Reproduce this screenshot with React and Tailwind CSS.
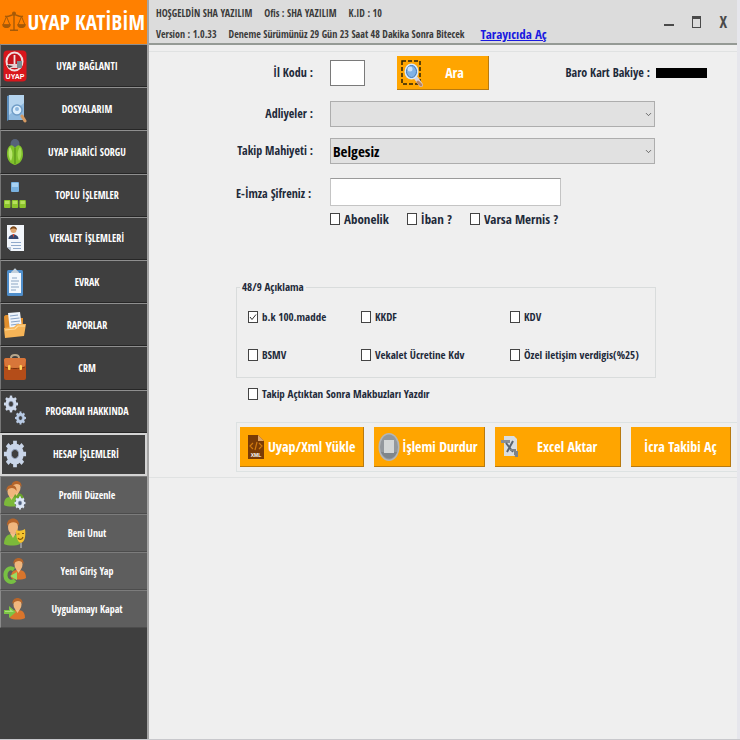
import { ChevronDown } from 'lucide-react';
import clsx from 'clsx';

/* ---------- Sidebar icons ---------- */

function ScalesIcon() {
  return (
    <svg viewBox="0 0 24 24" className="w-6 h-6 shrink-0" fill="none" stroke="#a65a08" strokeWidth="1.4">
      <path d="M12 2.5v17M8 20.2h8M3 6.2c4 1.2 6-1.6 9-1.6s5 2.8 9 1.6" />
      <path d="M4.5 6.5 1 15h7L4.5 6.5ZM19.5 6.5 16 15h7L19.5 6.5Z" strokeWidth="1" />
      <path d="M1 15c.6 3 6.400 3 7 0ZM16 15c.6 3 6.400 3 7 0Z" fill="#a65a08" />
      <circle cx="12" cy="3.600" r="1.300" fill="#a65a08" />
    </svg>
  );
}

function UyapIcon() {
  return (
    <svg viewBox="0 0 24 32" className="w-6 h-8">
      <rect x="0.500" y="0.500" width="23" height="31" rx="4" fill="#d9161c" />
      <ellipse cx="11.500" cy="11.500" rx="8" ry="9" fill="#c5131a" stroke="#f0dede" strokeWidth="2" />
      <path d="M11.500 5v9" stroke="#f3e4e4" strokeWidth="1.800" />
      <path d="M5 14h13l-2 4H7Z" fill="#e8cfd0" />
      <path d="m4 15 6 1-4 2Z" fill="#3c3c3c" />
      <rect x="14" y="11" width="5" height="7" fill="#7f8d94" />
      <text x="12" y="29" textAnchor="middle" fontSize="7" fontWeight="700" fontFamily="Liberation Sans" fill="#fff">UYAP</text>
    </svg>
  );
}

function FilesIcon() {
  return (
    <svg viewBox="0 0 24 32" className="w-6 h-8">
      <path d="M4 3 7 2v24l-3 2Z" fill="#5e8fbd" />
      <rect x="6" y="2" width="15" height="25" fill="#8fb9de" />
      <path d="M6 2h15v8L6 22Z" fill="#b5d4ee" />
      <circle cx="14" cy="17" r="5" fill="#dceefc" stroke="#6f9cc6" strokeWidth="1.500" />
      <circle cx="14" cy="16" r="2" fill="#8db6dd" />
      <path d="m19 23 3 5" stroke="#d59a62" strokeWidth="3" strokeLinecap="round" />
    </svg>
  );
}

function BugIcon() {
  return (
    <svg viewBox="0 0 24 32" className="w-6 h-8">
      <ellipse cx="12" cy="8" rx="4.500" ry="5" fill="#56627a" />
      <path d="M12 12C8 6 4 11 4 18s4 10 8 11c4-1 8-4 8-11s-4-12-8-6Z" fill="#7fc02b" />
      <path d="M7 11c-2 3-2 10 1 14 2-5 2-10-1-14Z" fill="#b9e56c" />
      <path d="M17 11c2 3 2 10-1 14-2-5-2-10 1-14Z" fill="#a4dc50" />
      <path d="M12 12v16" stroke="#4e8515" strokeWidth="1" />
    </svg>
  );
}

function BlocksIcon() {
  return (
    <svg viewBox="0 0 24 32" className="w-6 h-8">
      <rect x="8" y="3" width="8" height="10" rx="1" fill="#79b2e0" />
      <rect x="9" y="4" width="6" height="4" fill="#a8d2f2" />
      <rect x="1" y="21" width="6.500" height="8" rx="1" fill="#8cc42c" />
      <rect x="8.700" y="21" width="6.500" height="8" rx="1" fill="#8cc42c" />
      <rect x="16.400" y="21" width="6.500" height="8" rx="1" fill="#8cc42c" />
      <path d="M2 22h4.500v3H2ZM9.700 22h4.500v3H9.700ZM17.400 22h4.500v3h-4.500Z" fill="#b6e05c" />
    </svg>
  );
}

function ProxyIcon() {
  return (
    <svg viewBox="0 0 24 32" className="w-6 h-8">
      <path d="M4 3h17v26H8l-4-4Z" fill="#f2f6fb" />
      <path d="M4 25h4v4Z" fill="#b8c6d8" />
      <circle cx="10.500" cy="8" r="3" fill="#e0a872" />
      <path d="M7 8c0-5 7-5 7 0-2-2-5-2-7 0Z" fill="#7c4a1c" />
      <path d="M5.500 17c0-6 10-6 10 0Z" fill="#34466f" />
      <path d="m9.500 12 1 4 1-4Z" fill="#d84b30" />
      <path d="M8 20.500h10M8 23.500h10M10 26.500h8" stroke="#8fa9cb" strokeWidth="1.200" />
    </svg>
  );
}

function ClipboardIcon() {
  return (
    <svg viewBox="0 0 24 32" className="w-6 h-8">
      <rect x="4" y="4" width="16" height="26" rx="1.500" fill="#4f8ecb" />
      <path d="M6 7h12v20H6Z" fill="#f3f8fd" />
      <path d="M8 7c0-2 2-2 2.500-3 .5-2 2.500-2 3 0 .5 1 2.500 1 2.500 3Z" fill="#c3d0dc" />
      <path d="M9 12h5M8 15h8M8 18h7M8 21h8M8 24h5" stroke="#8ba6c6" strokeWidth="1.200" />
    </svg>
  );
}

function FolderIcon() {
  return (
    <svg viewBox="0 0 24 32" className="w-6 h-8">
      <path d="M1 8c0-1 1-2 2-2h5l2 3h10v18H2Z" fill="#e08f2e" />
      <path d="m5 4 12-1 2 16-12 3Z" fill="#eef4fb" />
      <path d="m7 7 8-1M7.500 10l9-1M8 13l9-1M8 16l8-1" stroke="#88a3c6" strokeWidth="1.200" />
      <path d="M1 19 11 18l3-3h9l-2 12-19 2Z" fill="#f6b457" />
      <path d="m2 21 10-1 3-3h7" stroke="#ffdc9c" strokeWidth="1.200" fill="none" />
    </svg>
  );
}

function BriefcaseIcon() {
  return (
    <svg viewBox="0 0 24 32" className="w-6 h-8">
      <path d="M8 6c0-4 8-4 8 0" stroke="#b8a78c" strokeWidth="2" fill="none" />
      <rect x="1" y="6" width="22" height="22" rx="2" fill="#b44d19" />
      <path d="M1 8c0-1 1-2 2-2h18c1 0 2 1 2 2l-1 7c-6 2-14 2-20 0Z" fill="#d8763a" />
      <path d="M2 15c6 2 14 2 20 0" stroke="#7b300c" strokeWidth="1" fill="none" />
      <rect x="5" y="13" width="2.500" height="5" rx="1" fill="#ffd45a" />
      <rect x="16.500" y="13" width="2.500" height="5" rx="1" fill="#ffd45a" />
    </svg>
  );
}

function Cog({ cx, cy, r, fill }) {
  const teeth = [0, 45, 90, 135, 180, 225, 270, 315];
  return (
    <g transform={`translate(${cx} ${cy}) scale(1 1.2)`}>
      {teeth.map((a) => (
        <rect key={a} x={-r * 0.22} y={-r * 1.3} width={r * 0.44} height={r * 0.6} fill={fill} transform={`rotate(${a})`} />
      ))}
      <circle r={r * 0.72} fill="none" stroke={fill} strokeWidth={r * 0.62} />
      <circle r={r * 0.43} fill="none" stroke="#8b9ab3" strokeWidth={r * 0.1} />
    </g>
  );
}

function GearsIcon() {
  return (
    <svg viewBox="0 0 24 32" className="w-6 h-8">
      <Cog cx={8} cy={9} r={5.4} fill="#cfdaec" />
      <Cog cx={17.5} cy={23} r={4.2} fill="#b8cae4" />
    </svg>
  );
}

function GearIcon() {
  return (
    <svg viewBox="0 0 24 32" className="w-6 h-8">
      <Cog cx={12} cy={16} r={8.5} fill="#c9d5e8" />
    </svg>
  );
}

function Person({ x, y, shirt }) {
  return (
    <g transform={`translate(${x} ${y})`}>
      <path d="M0 21c0-8 4-8 7-8s8 0 8 8c-3 2-12 2-15 0Z" fill={shirt} />
      <path d="m5 12 2.500 4 2.500-4Z" fill="#f2c08b" />
      <ellipse cx="7.500" cy="7.500" rx="4" ry="5.500" fill="#f0b67d" />
      <path d="M2.500 7c-1-8 11-8 10 0-2-4-7-4-10 0Z" fill="#b5652b" />
    </g>
  );
}

function ProfileIcon() {
  return (
    <svg viewBox="0 0 24 32" className="w-6 h-8">
      <Person x={6} y={1} shirt="#6aa52c" />
      <Person x={1} y={5} shirt="#7cb93a" />
      <circle cx="17" cy="24" r="5" fill="#51617f" />
      <Cog cx={17} cy={24} r={4.2} fill="#dde7f5" />
    </svg>
  );
}

function ForgetIcon() {
  return (
    <svg viewBox="0 0 24 32" className="w-6 h-8">
      <path d="M1 27c0-6 3-10 8-10s8 4 8 10c-4 2-12 2-16 0Z" fill="#7cb93a" />
      <path d="m7 16 3 5 3-5Z" fill="#f2c08b" />
      <ellipse cx="10" cy="10" rx="5" ry="7" fill="#f0b67d" />
      <path d="M4 9c-1-10 13-10 12 0-2-5-9-5-12 0Z" fill="#b5652b" />
      <path d="M13 13c3 1 6 1 9-1 1 6 0 13-4 14-4-1-5-7-5-13Z" fill="#f7c42f" />
      <path d="M14.500 17h2M19 16.500h2M15 21c1 2 4 2 5-1" stroke="#865b06" strokeWidth="1.200" fill="none" />
      <path d="M18 26v5" stroke="#c9c9c9" strokeWidth="1" />
    </svg>
  );
}

function LoginIcon() {
  return (
    <svg viewBox="0 0 24 32" className="w-6 h-8">
      <Person x={8} y={2} shirt="#d9752c" />
      <path d="M11 14.500C6 11 2 16 2.500 21S8 29 12 25" stroke="#77c043" strokeWidth="4" fill="none" />
      <path d="m7 21 7-4v8Z" fill="#9adb62" />
    </svg>
  );
}

function ExitIcon() {
  return (
    <svg viewBox="0 0 24 32" className="w-6 h-8">
      <Person x={7} y={4} shirt="#d9752c" />
      <path d="M1 17h5v-4l7 6-7 6v-4H1Z" fill="#7cc544" />
      <path d="M2 18h5v-2l4 3H2Z" fill="#a9e07a" />
    </svg>
  );
}

/* ---------- Button icons ---------- */

function SearchIcon() {
  return (
    <svg viewBox="0 0 24 30" className="w-6 h-[30px] shrink-0">
      <rect x="1" y="3" width="18" height="23" fill="none" stroke="#2a2208" strokeWidth="1.500" strokeDasharray="4 2" />
      <path d="m15 20 5 7" stroke="#d9d3d8" strokeWidth="4" strokeLinecap="round" />
      <path d="m17 24 3 3" stroke="#b98563" strokeWidth="3" strokeLinecap="round" />
      <ellipse cx="10.500" cy="13.500" rx="7" ry="8" fill="#d8e9f8" />
      <ellipse cx="10.500" cy="13.500" rx="5" ry="6" fill="#7fb2e6" stroke="#3f74b0" strokeWidth="1" />
      <ellipse cx="9" cy="11" rx="2.500" ry="2.500" fill="#c9e2fa" />
    </svg>
  );
}

function XmlIcon() {
  return (
    <svg viewBox="0 0 16 24" className="w-4 h-6 shrink-0">
      <path d="M0 0h10l6 6v18H0Z" fill="#7a3b06" />
      <path d="M10 0v6h6Z" fill="#e0a566" />
      <path d="m5 8-3 3 3 3M11 8l3 3-3 3M9 7l-2 8" stroke="#d17a10" strokeWidth="1.200" fill="none" />
      <text x="8" y="21.500" textAnchor="middle" fontSize="5" fontWeight="700" fontFamily="Liberation Sans" fill="#fff">XML</text>
    </svg>
  );
}

function StopIcon() {
  return (
    <svg viewBox="0 0 22 30" className="w-[22px] h-[30px] shrink-0">
      <ellipse cx="11" cy="15" rx="10.500" ry="14" fill="#b3b6b8" />
      <ellipse cx="11" cy="15" rx="9" ry="12.500" fill="#92989d" />
      <path d="M3 20c3 8 13 9 16 0Z" fill="#7f868b" />
      <rect x="6" y="8" width="10" height="13" fill="#d3d7d7" />
    </svg>
  );
}

function ExcelIcon() {
  return (
    <svg viewBox="0 0 18 24" className="w-[18px] h-6 shrink-0">
      <path d="M3 1h10l3 3v17H3Z" fill="#d9dde0" />
      <path d="M0 5h9v3H0Z" fill="#8a8f95" />
      <path d="m5 8 7 9M12 6 6 17" stroke="#5b6570" strokeWidth="2" />
      <path d="M9 15h5v5" stroke="#7d838a" strokeWidth="2" fill="none" />
      <path d="M13 16h4v6h-3Z" fill="#7d838a" />
    </svg>
  );
}

/* ---------- Data ---------- */

const MENU = [
  { label: 'UYAP BAĞLANTI', icon: UyapIcon },
  { label: 'DOSYALARIM', icon: FilesIcon },
  { label: 'UYAP HARİCİ SORGU', icon: BugIcon },
  { label: 'TOPLU İŞLEMLER', icon: BlocksIcon },
  { label: 'VEKALET İŞLEMLERİ', icon: ProxyIcon },
  { label: 'EVRAK', icon: ClipboardIcon },
  { label: 'RAPORLAR', icon: FolderIcon },
  { label: 'CRM', icon: BriefcaseIcon },
  { label: 'PROGRAM HAKKINDA', icon: GearsIcon },
  { label: 'HESAP İŞLEMLERİ', icon: GearIcon, active: true },
];

const SUBMENU = [
  { label: 'Profili Düzenle', icon: ProfileIcon },
  { label: 'Beni Unut', icon: ForgetIcon },
  { label: 'Yeni Giriş Yap', icon: LoginIcon },
  { label: 'Uygulamayı Kapat', icon: ExitIcon },
];

/* ---------- Parts ---------- */

function MenuButton({ item, sub }) {
  const Icon = item.icon;
  return (
    <button
      type="button"
      className={clsx(
        'flex items-center w-full text-white text-[10px] leading-4 font-bold',
        sub && 'pl-0.5 border-y border-l bg-[#5e5e5e] border-t-[#7c7c7c] border-b-[#4c4c4c] border-l-[#8a8a8a]',
        !sub && !item.active && 'pl-0.5 border-y border-l bg-[#3f3f3f] border-t-[#8f8f8f] border-b-[#262626] border-l-[#777777]',
        item.active && 'pl-px bg-[#3f3f3f] border-2 border-[#d4d4d4]'
      )}
    >
      <Icon />
      <span className="flex-1 text-center whitespace-nowrap">{item.label}</span>
    </button>
  );
}

function Check({ label, checked }) {
  return (
    <label className="flex items-center gap-1 whitespace-nowrap">
      <span className="grid place-items-center">
        <input
          type="checkbox"
          defaultChecked={checked}
          className="peer appearance-none col-start-1 row-start-1 w-2.5 h-3 bg-white border border-[#444444]"
        />
        <svg
          viewBox="0 0 10 12"
          className="col-start-1 row-start-1 w-2.5 h-3 pointer-events-none invisible peer-checked:visible"
          fill="none"
          stroke="#333333"
        >
          <path d="m2 6 2 2.500L8 3.500" />
        </svg>
      </span>
      {label}
    </label>
  );
}

function Dropdown({ id, options }) {
  return (
    <div className="grid items-center">
      <select
        id={id}
        className="appearance-none col-start-1 row-start-1 w-full h-[26px] px-0.5 bg-[#e1e1e1] border border-[#adadad] text-black text-[15px] leading-5"
      >
        {options.map((o) => (
          <option key={o}>{o}</option>
        ))}
      </select>
      <ChevronDown size={9} className="col-start-1 row-start-1 justify-self-end mr-0.5 text-[#444444] pointer-events-none" />
    </div>
  );
}

function ActionButton({ icon: Icon, children, className }) {
  return (
    <button
      type="button"
      className={clsx(
        'flex items-center bg-[#ffa500] border-b border-r border-[#b87a10] text-white font-bold text-[14px] leading-5 whitespace-nowrap',
        className
      )}
    >
      {Icon && <Icon />}
      <span className="flex-1 text-center">{children}</span>
    </button>
  );
}

/* ---------- Page ---------- */

export default function App() {
  return (
    <div className="flex min-h-screen bg-[#efefef] border-b border-[#c8c8cc] font-['Open_Sans_Condensed','Roboto_Condensed','Open_Sans',sans-serif] text-[#1e2a3a]">

      {/* Sidebar */}
      <aside className="w-[149px] shrink-0 flex flex-col bg-[#3f3f3f] border-r-2 border-[#a4a4a4]">
        <div className="h-11 px-0.5 flex items-center justify-between bg-[#ff8000] text-white">
          <ScalesIcon />
          <h1 className="text-[21px] leading-6 font-bold whitespace-nowrap">UYAP KATİBİM</h1>
        </div>
        <nav>
          <div className="grid auto-rows-fr min-h-[432px]">
            {MENU.map((item) => (
              <MenuButton key={item.label} item={item} />
            ))}
          </div>
          <div className="grid auto-rows-fr min-h-[152px]">
            {SUBMENU.map((item) => (
              <MenuButton key={item.label} item={item} sub />
            ))}
          </div>
        </nav>
      </aside>

      <div className="flex-1 min-w-0 flex flex-col border-r-3 border-[#e6e6ec]">
        {/* Title bar */}
        <header className="h-[45px] pl-[7px] pr-2.5 flex justify-between bg-[#dcdcdc] border-b-2 border-[#959a95]">
          <div className="flex flex-col gap-1.5 pt-1.5 text-[10px] leading-[15px] font-semibold text-[#3a3a3a] whitespace-nowrap">
            <div className="flex gap-3">
              <span>HOŞGELDİN SHA YAZILIM</span>
              <span>Ofis : SHA YAZILIM</span>
              <span>K.ID : 10</span>
            </div>
            <div className="flex gap-3">
              <span>Version : 1.0.33</span>
              <span>Deneme Sürümünüz 29 Gün 23 Saat 48 Dakika Sonra Bitecek</span>
              <a href="#tarayici" className="ml-1 text-[13px] leading-[15px] font-bold text-[#1a1ae0] underline">Tarayıcıda Aç</a>
            </div>
          </div>
          <div className="flex items-center gap-[18px] text-[#4a4a4a]">
            <button type="button" aria-label="Küçült" className="w-2.5 h-3 flex items-end">
              <span className="w-full h-0.5 mb-0.5 bg-[#4a4a4a]" />
            </button>
            <button type="button" aria-label="Büyüt" className="w-[9px] h-3 border border-t-[3px] border-[#4a4a4a]" />
            <button type="button" aria-label="Kapat" className="text-base leading-4 font-bold">X</button>
          </div>
        </header>

        <main className="mt-1.5 border-y border-[#e0e2e2] pb-[5px] font-bold text-xs leading-4">
          {/* Query form */}
          <form className="pl-[87px]">
            <div className="grid grid-cols-[77px_1fr] gap-x-[17px] pt-1 pr-[30px] items-center">
              <label htmlFor="ilkodu" className="text-right">İl Kodu :</label>
              <div className="flex items-center justify-between">
                <div className="flex items-center gap-8">
                  <input id="ilkodu" type="text" className="w-[35px] h-[26px] px-1 bg-white border border-[#7a7a7a]" />
                  <ActionButton icon={SearchIcon} className="w-[92px] h-[34px] pl-1 pr-1">Ara</ActionButton>
                </div>
                <div className="flex items-center gap-1.5 whitespace-nowrap">
                  <span>Baro Kart Bakiye :</span>
                  <span className="w-[51px] h-2.5 bg-black" />
                </div>
              </div>
            </div>

            <div className="grid grid-cols-[77px_1fr] gap-x-[17px] gap-y-[11px] mt-[11px] mr-[82px] items-center">
              <label htmlFor="adliyeler" className="text-right">Adliyeler :</label>
              <Dropdown id="adliyeler" options={['']} />
              <label htmlFor="mahiyet" className="text-right whitespace-nowrap">Takip Mahiyeti :</label>
              <Dropdown id="mahiyet" options={['Belgesiz']} />
            </div>

            <div className="grid grid-cols-[77px_1fr] gap-x-[17px] gap-y-1 mt-[14px] mr-44 items-center">
              <label htmlFor="eimza" className="whitespace-nowrap pt-1">E-İmza Şifreniz :</label>
              <input id="eimza" type="password" className="w-full h-7 px-1 bg-white border border-[#c4c4c4] border-t-[#9a9a9a]" />
              <div className="col-start-2 flex gap-[18px] text-[13px] leading-[18px]">
                <Check label="Abonelik" />
                <Check label="İban ?" />
                <Check label="Varsa Mernis ?" />
              </div>
            </div>

            {/* 48/9 options */}
            <fieldset className="mt-[51px] mr-[81px] px-[11px] pb-3.5 border border-[#d9dcdc] text-[11px]">
              <legend className="-ml-2 px-0.5">48/9 Açıklama</legend>
              <div className="grid grid-cols-[113px_149px_1fr] gap-y-[22px] pt-3.5">
                <Check label="b.k 100.madde" checked />
                <Check label="KKDF" />
                <Check label="KDV" />
                <Check label="BSMV" />
                <Check label="Vekalet Ücretine Kdv" />
                <Check label="Özel iletişim verdigis(%25)" />
              </div>
            </fieldset>
            <div className="flex mt-2 pl-3 text-[11px]">
              <Check label="Takip Açtıktan Sonra Makbuzları Yazdır" />
            </div>

            {/* Actions */}
            <div className="grid grid-cols-[124fr_110fr_126fr_100fr] auto-rows-[40px] gap-x-2.5 mt-5 py-1 pl-[3px] pr-[6px] border border-r-0 border-[#dde2e2]">
              <ActionButton icon={XmlIcon} className="pl-2 pr-1">Uyap/Xml Yükle</ActionButton>
              <ActionButton icon={StopIcon} className="pl-1 pr-1">İşlemi Durdur</ActionButton>
              <ActionButton icon={ExcelIcon} className="pl-1.5 pr-1">Excel Aktar</ActionButton>
              <ActionButton>İcra Takibi Aç</ActionButton>
            </div>
          </form>
        </main>
      </div>
    </div>
  );
}
